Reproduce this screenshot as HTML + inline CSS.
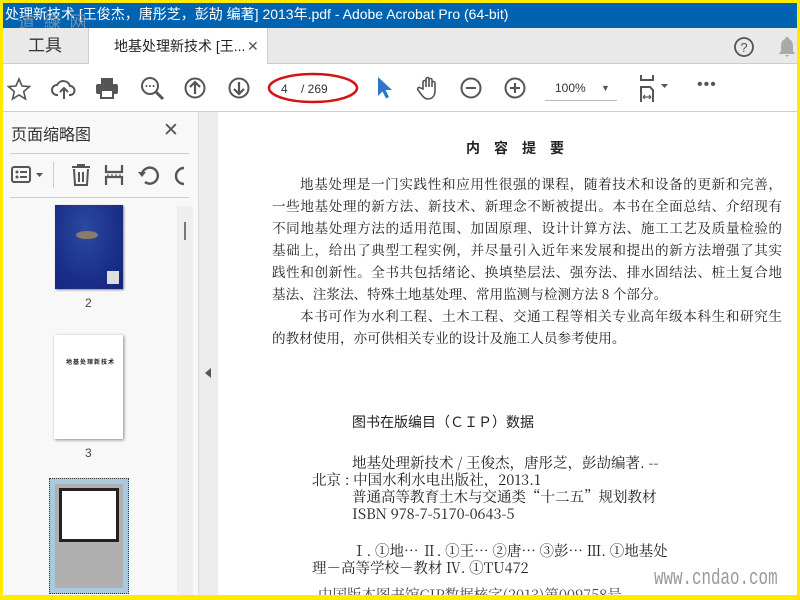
<!DOCTYPE html>
<html><head><meta charset="utf-8"><style>
*{margin:0;padding:0;box-sizing:border-box}
body{width:800px;height:600px;overflow:hidden;background:#ffeb00;font-family:"Liberation Sans","Noto Sans CJK SC",sans-serif;position:relative}
.a{position:absolute}
.title{left:3px;top:3px;width:794px;height:25px;background:#0063b1;color:#fff;font-size:14px;line-height:22px;padding-left:2px;white-space:nowrap;overflow:hidden}
.tabs{left:3px;top:28px;width:794px;height:36px;background:#e9e9e9;border-bottom:1px solid #ccc}
.tb{left:3px;top:64px;width:794px;height:48px;background:#fff;border-bottom:1px solid #ccc}
.side{left:3px;top:112px;width:195px;height:483px;background:#f8f8f8}
.gap{left:198px;top:112px;width:20px;height:483px;background:#ececec;border-left:1px solid #ddd}
.doc{left:218px;top:112px;width:579px;height:483px;background:#fff;overflow:hidden;font-family:"Noto Serif CJK SC","Liberation Serif",serif;color:#222}
.ln{position:absolute;left:54px;width:510px;font-size:13.6px;height:21px;line-height:21px;text-align:justify;text-align-last:justify;white-space:nowrap}
.ln.i{left:82px;width:482px}
.ln.l{text-align-last:left}
.c{position:absolute;font-size:14.5px;line-height:17px;white-space:nowrap}
svg{position:absolute}
</style></head><body>
<div class="a title">处理新技术 [王俊杰，唐彤芝，彭劼 编著] 2013年.pdf - Adobe Acrobat Pro (64-bit)</div>
<div class="a" style="left:18px;top:8px;color:#8a9bb0;font-size:17px;letter-spacing:2px;opacity:.8">道 練 网</div>
<div class="a tabs">
 <div class="a" style="left:0;top:0;width:84px;height:35px;font-size:17px;color:#333;text-align:center;line-height:36px">工具</div>
 <div class="a" style="left:85px;top:0;width:180px;height:37px;background:#fff;border-left:1px solid #ccc;border-right:1px solid #ccc;font-size:14px;color:#222;line-height:36px;padding-left:25px">地基处理新技术 [王... <span style="position:absolute;left:158px;color:#555;font-size:14px">✕</span></div>
 <svg style="left:730px;top:8px" width="22" height="22"><circle cx="11" cy="11" r="9" fill="none" stroke="#555" stroke-width="1.8"/><text x="11" y="16" font-size="13" text-anchor="middle" fill="#555" font-family="Liberation Sans">?</text></svg>
 <svg style="left:774px;top:7px" width="20" height="24"><path d="M10 2a2 2 0 0 1 2 2c3 1 4 4 4 8v4l2 3H2l2-3v-4c0-4 1-7 4-8a2 2 0 0 1 2-2z M8 20h4l-2 2z" fill="#aaa"/></svg>
</div>
<div class="a tb">
 <svg style="left:4px;top:13px" width="24" height="24"><path d="M12 2l3 7 7.5.6-5.8 4.9 1.8 7.5L12 18l-6.5 4 1.8-7.5L1.5 9.6 9 9z" fill="none" stroke="#555" stroke-width="1.6"/></svg>
 <svg style="left:48px;top:13px" width="26" height="24"><path d="M7 18H6a5 5 0 0 1 0-10 7 7 0 0 1 13 1 4.5 4.5 0 0 1 0 9h-1M13 22V11M9 15l4-4 4 4" fill="none" stroke="#555" stroke-width="2"/></svg>
 <svg style="left:92px;top:12px" width="24" height="24"><rect x="6" y="2" width="12" height="6" fill="#555"/><rect x="1" y="8" width="22" height="10" rx="2" fill="#555"/><rect x="6" y="14" width="12" height="8" fill="#fff" stroke="#555" stroke-width="2"/></svg>
 <svg style="left:137px;top:12px" width="26" height="26"><circle cx="10" cy="10" r="8" fill="none" stroke="#555" stroke-width="2"/><path d="M16 16l7 7" stroke="#555" stroke-width="3"/><circle cx="6.5" cy="10" r="1" fill="#555"/><circle cx="10" cy="10" r="1" fill="#555"/><circle cx="13.5" cy="10" r="1" fill="#555"/></svg>
 <svg style="left:181px;top:13px" width="24" height="24"><circle cx="11" cy="11" r="9.5" fill="none" stroke="#555" stroke-width="2"/><path d="M11 17V5M6 10l5-5 5 5" fill="none" stroke="#555" stroke-width="2.2"/></svg>
 <svg style="left:225px;top:13px" width="24" height="24"><circle cx="11" cy="11" r="9.5" fill="none" stroke="#555" stroke-width="2"/><path d="M11 5v12M6 12l5 5 5-5" fill="none" stroke="#555" stroke-width="2.2"/></svg>
 <svg style="left:262px;top:6px" width="96" height="36"><ellipse cx="48" cy="18" rx="44" ry="14" fill="none" stroke="#d21414" stroke-width="2.5"/><text x="16" y="23" font-size="12" fill="#333" font-family="Liberation Sans">4</text><text x="36" y="23" font-size="12" fill="#333" font-family="Liberation Sans">/ 269</text></svg>
 <svg style="left:373px;top:12px" width="16" height="24"><path d="M2 1v19l4.5-4.5 3.5 7 3-1.5-3.5-7H16z" fill="#2d77c9"/></svg>
 <svg style="left:413px;top:11px" width="26" height="26"><path d="M7 14V7a1.5 1.5 0 0 1 3 0v5V4a1.5 1.5 0 0 1 3 0v8V5a1.5 1.5 0 0 1 3 0v7V8a1.5 1.5 0 0 1 3 0v8c0 5-3 8-7 8-3 0-5-2-7-5l-3-4a1.5 1.5 0 0 1 2.5-2z" fill="none" stroke="#555" stroke-width="1.6"/></svg>
 <svg style="left:457px;top:13px" width="24" height="24"><circle cx="11" cy="11" r="9.5" fill="none" stroke="#555" stroke-width="2"/><path d="M6 11h10" stroke="#555" stroke-width="2"/></svg>
 <svg style="left:501px;top:13px" width="24" height="24"><circle cx="11" cy="11" r="9.5" fill="none" stroke="#555" stroke-width="2"/><path d="M6 11h10M11 6v10" stroke="#555" stroke-width="2"/></svg>
 <div class="a" style="left:542px;top:12px;width:72px;height:25px;border-bottom:1px solid #bbb;font-size:12px;color:#333;line-height:24px;padding-left:10px">100%<span style="position:absolute;left:56px;font-size:9px;color:#555">▼</span></div>
 <svg style="left:636px;top:10px" width="36" height="30"><path d="M2 1v5h12V1M2 28V13h9l3 3v12" fill="none" stroke="#555" stroke-width="2"/><path d="M4 23h8M4 23l2-2M4 23l2 2M12 23l-2-2M12 23l-2 2" stroke="#555" stroke-width="1.2" fill="none"/><path d="M22 10h7l-3.5 4z" fill="#555"/></svg>
 <div class="a" style="left:694px;top:12px;font-size:16px;color:#555;letter-spacing:1px">•••</div>
</div>
<div class="a side">
 <div class="a" style="left:8px;top:9px;font-size:16px;color:#333">页面缩略图</div>
 <div class="a" style="left:160px;top:7px;font-size:19px;color:#555">✕</div>
 <div class="a" style="left:7px;top:41px;width:179px;height:1px;background:#ccc"></div>
 <svg style="left:8px;top:52px" width="40" height="22"><rect x="1" y="3" width="18" height="15" rx="2" fill="none" stroke="#555" stroke-width="2"/><circle cx="6" cy="8" r="1.5" fill="#555"/><circle cx="6" cy="13" r="1.5" fill="#555"/><path d="M9 8h7M9 13h7" stroke="#555" stroke-width="2"/><path d="M25 9h7l-3.5 4z" fill="#555"/></svg>
 <div class="a" style="left:50px;top:50px;width:1px;height:26px;background:#ccc"></div>
 <svg style="left:67px;top:51px" width="22" height="24"><path d="M2 4h18M8 4V2h6v2M4 6l1 16h12l1-16M9 9v10M13 9v10" fill="none" stroke="#555" stroke-width="2"/></svg>
 <svg style="left:101px;top:52px" width="22" height="22"><path d="M2 1v7h16V1M2 21v-8h16v8" fill="none" stroke="#555" stroke-width="2.2"/><path d="M3 11h15" stroke="#555" stroke-dasharray="2 2"/></svg>
 <svg style="left:135px;top:51px" width="22" height="24"><path d="M7 19a8 8 0 1 0-3-8" fill="none" stroke="#555" stroke-width="2.4"/><path d="M0 9l4 5 4-5z" fill="#555"/></svg>
 <svg style="left:168px;top:51px" width="16" height="24"><path d="M13 5a8 8 0 0 0 0 16" fill="none" stroke="#555" stroke-width="2.4"/></svg>
 <div class="a" style="left:7px;top:85px;width:179px;height:1px;background:#ccc"></div>
 <div class="a" style="left:174px;top:94px;width:16px;height:389px;background:#eee"></div>
 <div class="a" style="left:181px;top:110px;width:2px;height:18px;background:#777"></div>
 <div class="a" style="left:52px;top:93px;width:68px;height:84px;background:radial-gradient(ellipse at 45% 30%,#2a4b9e,#1b2f8a 60%,#15257a);box-shadow:1px 1px 2px #888"></div>
 <div class="a" style="left:73px;top:119px;width:22px;height:8px;border-radius:50%;background:#8a7a6a"></div>
 <div class="a" style="left:104px;top:159px;width:12px;height:13px;background:#ddd"></div>
 <div class="a" style="left:82px;top:184px;font-size:12px;color:#444">2</div>
 <div class="a" style="left:51px;top:223px;width:69px;height:104px;background:#fff;box-shadow:1px 1px 3px #888"></div>
 <div class="a" style="left:63px;top:245px;font-size:6px;font-weight:bold;color:#222;letter-spacing:1px">地基处理新技术</div>
 <div class="a" style="left:82px;top:334px;font-size:12px;color:#444">3</div>
 <div class="a" style="left:46px;top:366px;width:80px;height:116px;background:#a9c9de;border:1px dotted #333"></div>
 <div class="a" style="left:52px;top:372px;width:68px;height:104px;background:#b0b0b0"></div>
 <div class="a" style="left:56px;top:376px;width:60px;height:54px;background:#fff;border:3px solid #222"></div>
</div>
<div class="a gap"><div class="a" style="left:6px;top:256px;width:0;height:0;border-top:5px solid transparent;border-bottom:5px solid transparent;border-right:6px solid #555"></div></div>
<div class="a doc">
 <div class="a" style="left:248px;top:26px;font-size:14px;font-weight:bold;letter-spacing:14px;font-family:'Noto Sans CJK SC',sans-serif">内容提要</div>
 <div class="ln i" style="top:61px">地基处理是一门实践性和应用性很强的课程，随着技术和设备的更新和完善，</div>
 <div class="ln" style="top:83px">一些地基处理的新方法、新技术、新理念不断被提出。本书在全面总结、介绍现有</div>
 <div class="ln" style="top:105px">不同地基处理方法的适用范围、加固原理、设计计算方法、施工工艺及质量检验的</div>
 <div class="ln" style="top:127px">基础上，给出了典型工程实例，并尽量引入近年来发展和提出的新方法增强了其实</div>
 <div class="ln" style="top:149px">践性和创新性。全书共包括绪论、换填垫层法、强夯法、排水固结法、桩土复合地</div>
 <div class="ln l" style="top:171px">基法、注浆法、特殊土地基处理、常用监测与检测方法 8 个部分。</div>
 <div class="ln i" style="top:193px">本书可作为水利工程、土木工程、交通工程等相关专业高年级本科生和研究生</div>
 <div class="ln l" style="top:215px">的教材使用，亦可供相关专业的设计及施工人员参考使用。</div>
 <div class="a" style="left:134px;top:300px;font-size:14px;font-family:'Noto Sans CJK SC',sans-serif">图书在版编目（ＣＩＰ）数据</div>
 <div class="c" style="left:134px;top:342px">地基处理新技术 / 王俊杰，唐彤芝，彭劼编著. --</div>
 <div class="c" style="left:94px;top:359px">北京 : 中国水利水电出版社，2013.1</div>
 <div class="c" style="left:134px;top:376px">普通高等教育土木与交通类“十二五”规划教材</div>
 <div class="c" style="left:134px;top:393px">ISBN 978-7-5170-0643-5</div>
 <div class="c" style="left:134px;top:430px">Ⅰ. ①地… Ⅱ. ①王… ②唐… ③彭… Ⅲ. ①地基处</div>
 <div class="c" style="left:94px;top:447px">理－高等学校－教材 Ⅳ. ①TU472</div>
 <div class="c" style="left:100px;top:474px;color:#444">中国版本图书馆CIP数据核字(2013)第009758号</div>
 <div class="a" style="left:436px;top:454px;font-size:22px;color:#999;font-family:'Liberation Mono',monospace;transform:scaleX(.72);transform-origin:left">www.cndao.com</div>
</div>
</body></html>
